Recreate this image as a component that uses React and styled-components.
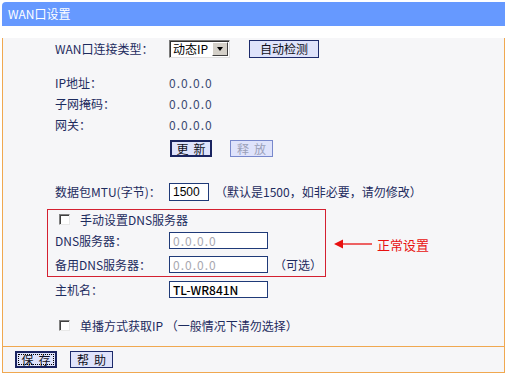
import React from "react";
import styled, { createGlobalStyle, css } from "styled-components";

const Global = createGlobalStyle`
  html, body { margin: 0; padding: 0; background: #ffffff; }
  body { font-family: "SimSun", "Noto Sans CJK SC", sans-serif; font-size: 12px; }
`;

const Frame = styled.div`
  margin: 2px 0 0 2px;
  width: 503px;
`;

const TitleBar = styled.div`
  height: 24px;
  background: #6699ff;
  border-radius: 4px 0 0 0;
  color: #ffffff;
  font-size: 12px;
  line-height: 24px;
  padding-left: 6px;
`;

const Content = styled.div`
  background: #f6f6f8;
  border-left: 1px solid #f0a850;
  border-right: 1px solid #f0a850;
  padding: 0 0 11px 0;
  color: #1d2b5e;
`;

const Row = styled.div`
  display: flex;
  align-items: center;
  height: ${(p) => p.$h || 21}px;
  margin-top: ${(p) => p.$mt || 0}px;
  padding-left: ${(p) => (p.$pl !== undefined ? p.$pl : 52)}px;
  gap: ${(p) => p.$gap || 0}px;
`;

const Label = styled.div`
  width: ${(p) => p.$w || 114}px;
  flex: none;
  white-space: nowrap;
`;

const Value = styled.div`
  color: #3a4a72;
  letter-spacing: 1px;
`;

const SelectBox = styled.div`
  width: 61px;
  height: 18px;
  box-sizing: border-box;
  background: #ffffff;
  border-top: 1px solid #7a7a7a;
  border-left: 1px solid #7a7a7a;
  border-right: 1px solid #e0e0e0;
  border-bottom: 1px solid #e0e0e0;
  box-shadow: inset 1px 1px 0 #303030;
  display: flex;
  align-items: center;
  color: #000;
  padding-left: 3px;
  justify-content: space-between;
  white-space: nowrap;
`;

const DropBtn = styled.div`
  width: 16px;
  height: 14px;
  flex: none;
  box-sizing: border-box;
  background: #d4d0c8;
  border-top: 1px solid #ffffff;
  border-left: 1px solid #ffffff;
  border-right: 1px solid #404040;
  border-bottom: 1px solid #404040;
  display: flex;
  align-items: center;
  justify-content: center;
  margin-right: 1px;
  &::after {
    content: "";
    border-left: 3.5px solid transparent;
    border-right: 3.5px solid transparent;
    border-top: 4px solid #000;
  }
`;

const Button = styled.button`
  font-family: inherit;
  font-size: 12px;
  height: ${(p) => p.$h || 17}px;
  width: ${(p) => p.$w || 42}px;
  padding: 0 0 0 ${(p) => p.$ls || 0}px;
  box-sizing: border-box;
  background: #dfe3fb;
  color: #101020;
  border: 1px solid #1c2a6b;
  letter-spacing: ${(p) => p.$ls || 0}px;
  white-space: nowrap;
  display: inline-flex;
  align-items: center;
  justify-content: center;
  ${(p) =>
    p.$strong &&
    css`
      border: 2px solid #1a2460;
    `}
  ${(p) =>
    p.$disabled &&
    css`
      color: #9aa0b8;
      border-color: #7888cc;
    `}
  ${(p) =>
    p.$focus &&
    css`
      border: 2px solid #1a2460;
      outline: 1px dotted #000;
      outline-offset: -4px;
    `}
`;

const TextInput = styled.div`
  width: ${(p) => p.$w || 99}px;
  height: ${(p) => p.$h || 17}px;
  box-sizing: border-box;
  background: #ffffff;
  border: 1px solid #1f3a78;
  display: flex;
  align-items: center;
  padding-left: 3px;
  font-family: ${(p) => (p.$sans ? '"Liberation Sans", sans-serif' : "inherit")};
  color: ${(p) => (p.$muted ? "#a8a8b0" : "#000")};
  letter-spacing: ${(p) => (p.$muted ? "1px" : "0")};
  font-weight: ${(p) => (p.$bold ? 500 : 400)};
`;

const Hint = styled.div`
  margin-left: 6px;
  white-space: nowrap;
`;

const CheckBox = styled.span`
  width: 11px;
  height: 11px;
  flex: none;
  box-sizing: border-box;
  background: #ffffff;
  border-top: 1px solid #808080;
  border-left: 1px solid #808080;
  border-right: 1px solid #e8e8e8;
  border-bottom: 1px solid #e8e8e8;
  box-shadow: inset 1px 1px 0 #404040;
`;

const CheckLabel = styled.span`
  margin-left: 10px;
  white-space: nowrap;
`;

const BoxRow = styled.div`
  display: flex;
  align-items: center;
  margin-top: 7px;
  padding-left: 44px;
`;

const RedBox = styled.div`
  width: 279px;
  box-sizing: border-box;
  border: 1px solid #d42030;
`;

const Annotation = styled.div`
  display: flex;
  align-items: center;
  margin-left: 8px;
  margin-top: 2px;
  color: #e81010;
  font-size: 13px;
`;

const Arrow = styled.svg`
  width: 38px;
  height: 10px;
  margin-right: 5px;
`;

const Footer = styled.div`
  height: 25px;
  background: #f6f6f8;
  border: 1px solid #f0a850;
  display: flex;
  align-items: center;
  padding-left: 12px;
  gap: 13px;
`;

export default function App() {
  return (
    <>
      <Global />
      <Frame>
        <TitleBar>WAN口设置</TitleBar>
        <Content>
          <Row $mt={12} $h={21}>
            <Label>WAN口连接类型：</Label>
            <SelectBox>
              动态IP
              <DropBtn />
            </SelectBox>
            <Button $w={70} $h={18} style={{ marginLeft: 19 }}>
              自动检测
            </Button>
          </Row>
          <Row $mt={13}>
            <Label>IP地址：</Label>
            <Value>0.0.0.0</Value>
          </Row>
          <Row>
            <Label>子网掩码：</Label>
            <Value>0.0.0.0</Value>
          </Row>
          <Row>
            <Label>网关：</Label>
            <Value>0.0.0.0</Value>
          </Row>
          <Row $mt={4} $h={18} $pl={167} $gap={18}>
            <Button $strong $ls={5}>
              更新
            </Button>
            <Button $disabled $w={43} $ls={5}>
              释放
            </Button>
          </Row>
          <Row $mt={24}>
            <Label>数据包MTU(字节)：</Label>
            <TextInput $w={40} $h={18} $sans>
              1500
            </TextInput>
            <Hint>（默认是1500，如非必要，请勿修改）</Hint>
          </Row>
          <BoxRow>
            <RedBox>
              <Row $h={18} $pl={11}>
                <CheckBox />
                <CheckLabel>手动设置DNS服务器</CheckLabel>
              </Row>
              <Row $h={25} $pl={7}>
                <Label>DNS服务器：</Label>
                <TextInput $muted>0.0.0.0</TextInput>
              </Row>
              <Row $h={23} $pl={7}>
                <Label>备用DNS服务器：</Label>
                <TextInput $muted>0.0.0.0</TextInput>
                <Hint>（可选）</Hint>
              </Row>
            </RedBox>
            <Annotation>
              <Arrow viewBox="0 0 38 10">
                <polygon points="0,5 9,0.5 9,9.5" fill="#e81010" />
                <line x1="8" y1="5" x2="38" y2="5" stroke="#e81010" strokeWidth="1.3" />
              </Arrow>
              正常设置
            </Annotation>
          </BoxRow>
          <Row $h={25}>
            <Label>主机名：</Label>
            <TextInput $bold>TL-WR841N</TextInput>
          </Row>
          <Row $mt={13} $h={20} $pl={56}>
            <CheckBox />
            <CheckLabel>单播方式获取IP （一般情况下请勿选择）</CheckLabel>
          </Row>
        </Content>
        <Footer>
          <Button $focus $ls={5}>
            保存
          </Button>
          <Button $w={43} $ls={5}>
            帮助
          </Button>
        </Footer>
      </Frame>
    </>
  );
}
